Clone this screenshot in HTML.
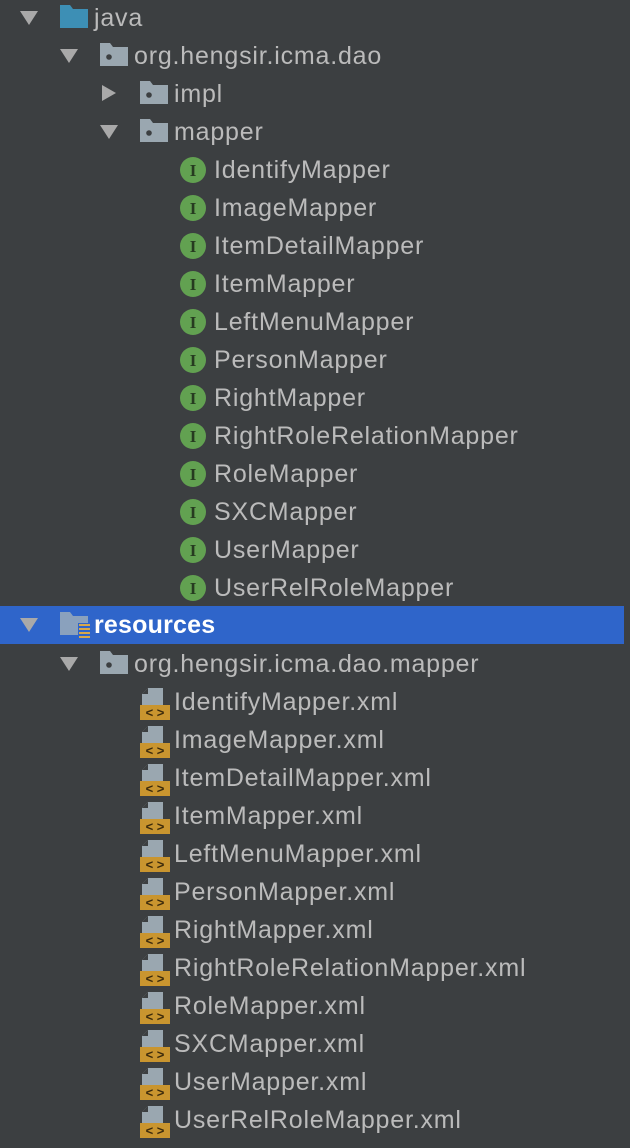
<!DOCTYPE html>
<html><head><meta charset="utf-8"><style>
body{margin:0;width:630px;height:1148px;background:#3c3f41;overflow:hidden;position:relative;font-family:"Liberation Sans",sans-serif}
.r{position:absolute;left:0;width:630px;height:38px}
.t{position:absolute;top:0;line-height:38px;font-size:25px;letter-spacing:0.8px;color:#bbbbbb;white-space:nowrap}
.sel{background:#2f65ca;width:624px}
.sel .t{color:#fff;font-weight:bold;letter-spacing:0.2px}
svg{position:absolute;top:0}
</style></head><body>
<svg width="0" height="0" style="position:absolute">
<defs>
<g id="dn"><polygon points="0,12 18,12 9,26" fill="#a9a9a9"/></g>
<g id="rt"><polygon points="2,10 2,26 16,18" fill="#a9a9a9"/></g>
<g id="pk"><path d="M0,6 H10 L13,10 H28 V29 H0 Z" fill="#9aa7b0"/><circle cx="9" cy="20" r="2.8" fill="#3c3f41"/></g>
<g id="fj"><path d="M0,6 H10 L13,10 H28 V29 H0 Z" fill="#3d8fb5"/></g>
<g id="fr"><path d="M0,6 H10 L13,10 H28 V29 H0 Z" fill="#8aa1bd"/><rect x="18" y="17" width="12" height="14" fill="#2f65ca"/><g fill="#d8a74a"><rect x="19" y="18" width="11" height="2"/><rect x="19" y="22" width="11" height="2"/><rect x="19" y="26" width="11" height="2"/><rect x="19" y="30" width="11" height="2"/></g></g>
<g id="ii"><circle cx="13" cy="19" r="13" fill="#62a151"/><text x="13" y="25" font-family="Liberation Serif,serif" font-size="17" font-weight="bold" fill="#263b20" text-anchor="middle">I</text></g>
<g id="xm"><path d="M2,11 L8,5 H23 V22 H2 Z" fill="#9aa7b0"/><path d="M2,11 L8,5 V11 Z" fill="#3c3f41"/><rect x="0" y="22" width="30" height="15" fill="#c9952f"/><text x="15" y="34" font-family="Liberation Sans,sans-serif" font-size="13" font-weight="bold" fill="#3b2a0c" text-anchor="middle">&lt; &gt;</text></g>
</defs></svg>

<div class="r" style="top:-1px"><svg width="630" height="38"><use href="#dn" x="20"/><use href="#fj" x="60"/></svg><span class="t" style="left:94px">java</span></div>
<div class="r" style="top:37px"><svg width="630" height="38"><use href="#dn" x="60"/><use href="#pk" x="100"/></svg><span class="t" style="left:134px">org.hengsir.icma.dao</span></div>
<div class="r" style="top:75px"><svg width="630" height="38"><use href="#rt" x="100"/><use href="#pk" x="140"/></svg><span class="t" style="left:174px">impl</span></div>
<div class="r" style="top:113px"><svg width="630" height="38"><use href="#dn" x="100"/><use href="#pk" x="140"/></svg><span class="t" style="left:174px">mapper</span></div>

<div class="r" style="top:151px"><svg width="630" height="38"><use href="#ii" x="180"/></svg><span class="t" style="left:214px">IdentifyMapper</span></div>
<div class="r" style="top:189px"><svg width="630" height="38"><use href="#ii" x="180"/></svg><span class="t" style="left:214px">ImageMapper</span></div>
<div class="r" style="top:227px"><svg width="630" height="38"><use href="#ii" x="180"/></svg><span class="t" style="left:214px">ItemDetailMapper</span></div>
<div class="r" style="top:265px"><svg width="630" height="38"><use href="#ii" x="180"/></svg><span class="t" style="left:214px">ItemMapper</span></div>
<div class="r" style="top:303px"><svg width="630" height="38"><use href="#ii" x="180"/></svg><span class="t" style="left:214px">LeftMenuMapper</span></div>
<div class="r" style="top:341px"><svg width="630" height="38"><use href="#ii" x="180"/></svg><span class="t" style="left:214px">PersonMapper</span></div>
<div class="r" style="top:379px"><svg width="630" height="38"><use href="#ii" x="180"/></svg><span class="t" style="left:214px">RightMapper</span></div>
<div class="r" style="top:417px"><svg width="630" height="38"><use href="#ii" x="180"/></svg><span class="t" style="left:214px">RightRoleRelationMapper</span></div>
<div class="r" style="top:455px"><svg width="630" height="38"><use href="#ii" x="180"/></svg><span class="t" style="left:214px">RoleMapper</span></div>
<div class="r" style="top:493px"><svg width="630" height="38"><use href="#ii" x="180"/></svg><span class="t" style="left:214px">SXCMapper</span></div>
<div class="r" style="top:531px"><svg width="630" height="38"><use href="#ii" x="180"/></svg><span class="t" style="left:214px">UserMapper</span></div>
<div class="r" style="top:569px"><svg width="630" height="38"><use href="#ii" x="180"/></svg><span class="t" style="left:214px">UserRelRoleMapper</span></div>

<div class="r sel" style="top:606px"><svg width="624" height="38"><use href="#dn" x="20"/><use href="#fr" x="60"/></svg><span class="t" style="left:94px">resources</span></div>
<div class="r" style="top:645px"><svg width="630" height="38"><use href="#dn" x="60"/><use href="#pk" x="100"/></svg><span class="t" style="left:134px">org.hengsir.icma.dao.mapper</span></div>

<div class="r" style="top:683px"><svg width="630" height="38"><use href="#xm" x="140"/></svg><span class="t" style="left:174px">IdentifyMapper.xml</span></div>
<div class="r" style="top:721px"><svg width="630" height="38"><use href="#xm" x="140"/></svg><span class="t" style="left:174px">ImageMapper.xml</span></div>
<div class="r" style="top:759px"><svg width="630" height="38"><use href="#xm" x="140"/></svg><span class="t" style="left:174px">ItemDetailMapper.xml</span></div>
<div class="r" style="top:797px"><svg width="630" height="38"><use href="#xm" x="140"/></svg><span class="t" style="left:174px">ItemMapper.xml</span></div>
<div class="r" style="top:835px"><svg width="630" height="38"><use href="#xm" x="140"/></svg><span class="t" style="left:174px">LeftMenuMapper.xml</span></div>
<div class="r" style="top:873px"><svg width="630" height="38"><use href="#xm" x="140"/></svg><span class="t" style="left:174px">PersonMapper.xml</span></div>
<div class="r" style="top:911px"><svg width="630" height="38"><use href="#xm" x="140"/></svg><span class="t" style="left:174px">RightMapper.xml</span></div>
<div class="r" style="top:949px"><svg width="630" height="38"><use href="#xm" x="140"/></svg><span class="t" style="left:174px">RightRoleRelationMapper.xml</span></div>
<div class="r" style="top:987px"><svg width="630" height="38"><use href="#xm" x="140"/></svg><span class="t" style="left:174px">RoleMapper.xml</span></div>
<div class="r" style="top:1025px"><svg width="630" height="38"><use href="#xm" x="140"/></svg><span class="t" style="left:174px">SXCMapper.xml</span></div>
<div class="r" style="top:1063px"><svg width="630" height="38"><use href="#xm" x="140"/></svg><span class="t" style="left:174px">UserMapper.xml</span></div>
<div class="r" style="top:1101px"><svg width="630" height="38"><use href="#xm" x="140"/></svg><span class="t" style="left:174px">UserRelRoleMapper.xml</span></div>
</body></html>
